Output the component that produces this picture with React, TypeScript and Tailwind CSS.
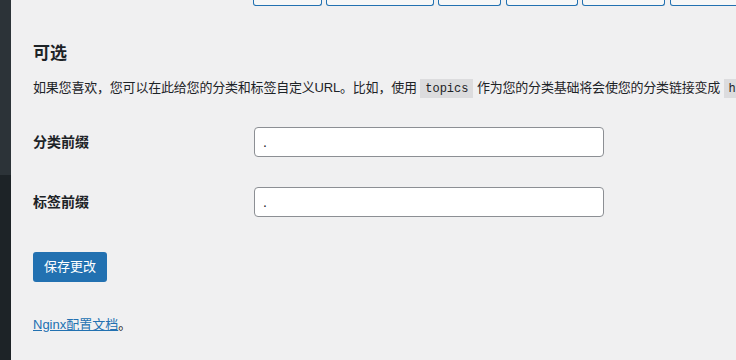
export default function App() {
  const topButtons = [
    { w: "w-[69px]", ml: "ml-[253px]" },
    { w: "w-[108px]", ml: "ml-[4px]" },
    { w: "w-[63px]", ml: "ml-[4px]" },
    { w: "w-[72px]", ml: "ml-[5px]" },
    { w: "w-[83px]", ml: "ml-[4px]" },
    { w: "w-[90px]", ml: "ml-[5px]" },
  ];

  return (
    <div
      className="flex h-[360px] w-[736px] overflow-hidden bg-[#f0f0f1] text-[#1d2327]"
      style={{ fontFamily: '"Liberation Sans", "Noto Sans CJK SC", sans-serif' }}
    >
      {/* Admin sidebar edge */}
      <div className="flex w-[11px] shrink-0 flex-col">
        <div className="h-[175px] bg-[#2c3338]" />
        <div className="flex-1 bg-[#1d2327]" />
      </div>

      <div className="relative min-w-0 flex-1 overflow-hidden">
        {/* Bottoms of the scrolled-away buttons */}
        <div className="flex h-[6px] -ml-[11px]">
          {topButtons.map((b, i) => (
            <div
              key={i}
              className={`${b.w} ${b.ml} shrink-0 rounded-b-[3px] border-x border-b border-[#2271b1] bg-[#f6f7f7]`}
            />
          ))}
        </div>

        <div className="pl-[22px]">
          <h2 className="mt-[37px] text-[17px] font-bold leading-[22px]">可选</h2>

          <p className="mt-[13px] whitespace-nowrap text-[13px] leading-[20px] tracking-[-0.2px]">
            如果您喜欢，您可以在此给您的分类和标签自定义URL。比如，使用{" "}
            <code
              className="bg-[#dcdcde] px-[5px] pb-[2px] pt-[3px] text-[12px] tracking-normal"
              style={{ fontFamily: '"Liberation Mono", monospace' }}
            >
              topics
            </code>{" "}
            作为您的分类基础将会使您的分类链接变成{" "}
            <code
              className="bg-[#dcdcde] px-[5px] pb-[2px] pt-[3px] text-[12px] tracking-normal"
              style={{ fontFamily: '"Liberation Mono", monospace' }}
            >
              https://example.org/topics/uncategorized/
            </code>
          </p>

          {/* Form rows */}
          <div className="mt-[28px] flex flex-col gap-[30px]">
            {["分类前缀", "标签前缀"].map((label) => (
              <div key={label} className="flex items-center">
                <label className="w-[221px] shrink-0 text-[14px] font-bold">{label}</label>
                <div className="flex h-[30px] w-[350px] items-center rounded-[4px] border border-[#8c8f94] bg-white px-[8px] text-[14px]">
                  .
                </div>
              </div>
            ))}
          </div>

          <button className="mt-[35px] h-[30px] rounded-[3px] bg-[#2271b1] px-[11px] text-[13px] text-white">
            保存更改
          </button>

          <p className="mt-[33px] text-[13px] leading-[20px]">
            <a className="text-[#2271b1] underline">Nginx配置文档</a>。
          </p>
        </div>
      </div>
    </div>
  );
}
